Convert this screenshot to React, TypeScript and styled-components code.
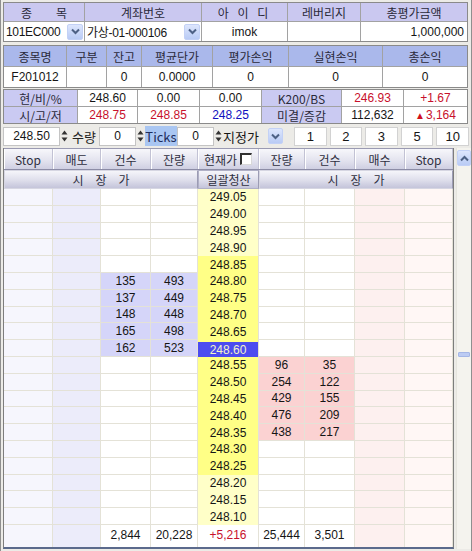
import styled, { createGlobalStyle } from "styled-components";

const GlobalStyle = createGlobalStyle`
  html, body {
    margin: 0;
    padding: 0;
    background: #ecebe7;
  }
  body {
    font-family: "Liberation Sans", "Noto Sans CJK KR", sans-serif;
    font-size: 12px;
    color: #151515;
  }
`;

type Tone =
  | "stopSell"
  | "sell"
  | "white"
  | "sellQty"
  | "buyQty"
  | "priceLight"
  | "priceBright"
  | "current"
  | "buy"
  | "stopBuy";

const toneBg: Record<Tone, string> = {
  stopSell: "#f6f6fd",
  sell: "#ececfa",
  white: "#ffffff",
  sellQty: "#d5d5f9",
  buyQty: "#fbd2d2",
  priceLight: "#ffffc8",
  priceBright: "#ffff86",
  //blue box sits inside a thin strip of the yellow price column
  current: "linear-gradient(#4c4cf0, #4c4cf0) content-box, #ffff86",
  buy: "#fdf0ef",
  stopBuy: "#fff7f5",
};

const bookCols = "49px 48px 50px 47px 61px 46px 50px 50px 48px";

//prices run from 249.05 down to 248.10
const prices = Array.from({ length: 20 }, (_, i) => (249.05 - i * 0.05).toFixed(2));
const currentPrice = "248.60";
const sellQty: Record<string, [string, string]> = {
  "248.80": ["135", "493"],
  "248.75": ["137", "449"],
  "248.70": ["148", "448"],
  "248.65": ["165", "498"],
  "248.60": ["162", "523"],
};
const buyQty: Record<string, [string, string]> = {
  "248.55": ["96", "35"],
  "248.50": ["254", "122"],
  "248.45": ["429", "155"],
  "248.40": ["476", "209"],
  "248.35": ["438", "217"],
};

const Window = styled.div`
  width: 472px;
  height: 551px;
  box-sizing: border-box;
  border-left: 1px solid #8f8f8f;
  border-right: 1px solid #8f8f8f;
  padding: 2px 2px 2px 2px;
  display: flex;
  flex-direction: column;
  overflow: hidden;
`;

const Table = styled.div<{ $cols: string; $rows: string; $mb?: number }>`
  display: grid;
  grid-template-columns: ${(p) => p.$cols};
  grid-template-rows: ${(p) => p.$rows};
  gap: 1px;
  background: #a2a2a2;
  border: 1px solid #8a8a8a;
  width: 465px;
  box-sizing: border-box;
  margin-bottom: ${(p) => p.$mb ?? 0}px;
`;

const Head = styled.div<{ $blue?: boolean; $spaced?: boolean }>`
  background: ${(p) => (p.$blue ? "#aab8eb" : "#cac8f0")};
  color: #2a2a3a;
  display: flex;
  align-items: center;
  justify-content: center;
  font-family: "Noto Sans CJK KR", sans-serif;
  font-size: 12px;
  letter-spacing: ${(p) => (p.$spaced ? "3px" : "0")};
  white-space: pre;
`;

const Label = styled.div`
  background: #cacaf2;
  color: #2a2a3a;
  display: flex;
  align-items: center;
  justify-content: center;
  font-family: "Noto Sans CJK KR", sans-serif;
  font-size: 12px;
`;

const Value = styled.div<{ $align?: string; $color?: string }>`
  background: #fff;
  display: flex;
  align-items: center;
  justify-content: ${(p) => p.$align ?? "center"};
  padding: 0 3px;
  color: ${(p) => p.$color ?? "#151515"};
  font-family: "Liberation Sans", "Noto Sans CJK KR", sans-serif;
  white-space: nowrap;
`;

const Combo = styled.div`
  background: #fff;
  display: flex;
  align-items: center;
  justify-content: space-between;
  padding: 0 1px 0 2px;
  white-space: nowrap;
  letter-spacing: -0.3px;
  font-family: "Liberation Sans", "Noto Sans CJK KR", sans-serif;
`;

const DropButton = styled.div<{ $w?: number }>`
  width: ${(p) => p.$w ?? 16}px;
  height: 16px;
  box-sizing: border-box;
  border: 1px solid #c3d1f6;
  border-radius: 2px;
  background: linear-gradient(#dde6fd, #b9cbf5);
  display: flex;
  align-items: center;
  justify-content: center;
  flex-shrink: 0;
`;

const Chevron = ({ up }: { up?: boolean }) => (
  <svg width="9" height="7" viewBox="0 0 9 7">
    <path
      d={up ? "M1 5.5 L4.5 2 L8 5.5" : "M1 1.5 L4.5 5 L8 1.5"}
      fill="none"
      stroke="#4d6185"
      strokeWidth="2"
    />
  </svg>
);

const Triangle = styled.span`
  color: #d0101c;
  font-size: 10px;
  margin-right: 1px;
`;

const ControlBar = styled.div`
  display: flex;
  align-items: center;
  height: 20px;
  margin-bottom: 2px;
`;

const Input = styled.div<{ $w: number }>`
  width: ${(p) => p.$w}px;
  height: 19px;
  box-sizing: border-box;
  background: #fff;
  border: 1px solid #c4c4c4;
  display: flex;
  align-items: center;
  justify-content: center;
`;

const Spin = styled.div`
  width: 7px;
  margin: 0 1px;
  display: flex;
  align-items: center;
`;

const SpinIcon = () => (
  <svg width="7" height="14" viewBox="0 0 7 14">
    <path d="M0.5 5.5 L3.5 1.5 L6.5 5.5 Z" fill="#333" />
    <path d="M0.5 8.5 L3.5 12.5 L6.5 8.5 Z" fill="#333" />
  </svg>
);

const BarLabel = styled.div<{ $w: number; $tinted?: boolean }>`
  width: ${(p) => p.$w}px;
  height: 20px;
  display: flex;
  align-items: center;
  justify-content: center;
  background: ${(p) => (p.$tinted ? "#a9c6f2" : "transparent")};
  color: ${(p) => (p.$tinted ? "#1c2c5c" : "#222")};
  font-family: "Noto Sans CJK KR", sans-serif;
  font-size: 13px;
`;

const OrderType = styled.div`
  width: 61px;
  display: flex;
  align-items: center;
  justify-content: space-between;
  font-family: "Noto Sans CJK KR", sans-serif;
  font-size: 13px;
  padding-right: 1px;
  box-sizing: border-box;
`;

const QtyButtons = styled.div`
  flex: 1;
  display: flex;
  gap: 3px;
  margin-left: 10px;
`;

const QtyButton = styled.div`
  flex: 1;
  height: 19px;
  box-sizing: border-box;
  background: #fff;
  border: 1px solid #d2d2d2;
  display: flex;
  align-items: center;
  justify-content: center;
  font-size: 13px;
`;

const Book = styled.div`
  flex: 1;
  display: flex;
  gap: 2px;
  width: 466px;
`;

const BookMain = styled.div`
  width: 451px;
  box-sizing: border-box;
  display: flex;
  flex-direction: column;
  border-left: 1px solid #7d7d7d;
  border-right: 1px solid #7d7d7d;
  border-bottom: 2px solid #5b6a8c;
  background: #fff;
`;

const HeadRow = styled.div`
  display: grid;
  grid-template-columns: ${bookCols};
  height: 20px;
  background: linear-gradient(#f7f7fb, #e4e4ef 55%, #cfcfe2);
  border-top: 1px solid #9a9ab2;
  border-bottom: 1px solid #8c8ca6;
`;

const HeadCell = styled.div`
  display: flex;
  align-items: center;
  justify-content: center;
  gap: 3px;
  border-right: 1px solid #c2c2d4;
  box-shadow: inset 1px 0 0 #ffffff;
  font-family: "Noto Sans CJK KR", sans-serif;
  font-size: 12px;
  color: #2f2f3f;
`;

const CheckBox = styled.span`
  width: 12px;
  height: 12px;
  box-sizing: border-box;
  background: #fff;
  border-top: 2px solid #303030;
  border-left: 2px solid #303030;
  border-right: 1px solid #d8d8d8;
  border-bottom: 1px solid #d8d8d8;
`;

const SubHeadRow = styled.div`
  display: grid;
  grid-template-columns: 194px 61px 194px;
  height: 18px;
  border-bottom: 1px solid #8c8ca6;
`;

const SubHeadCell = styled.div<{ $inset?: boolean }>`
  display: flex;
  align-items: center;
  justify-content: center;
  background: linear-gradient(#f5f5fa, #dedeeb 55%, #c4c4da);
  border: 1px solid ${(p) => (p.$inset ? "#b0b0c6" : "#d6d6e2")};
  border-right-color: #9c9cb4;
  font-family: "Noto Sans CJK KR", sans-serif;
  font-size: 12px;
  color: #2f2f3f;
  white-space: pre;
`;

const Row = styled.div<{ $fill?: boolean }>`
  display: grid;
  grid-template-columns: ${bookCols};
  height: ${(p) => (p.$fill ? "auto" : "16.8px")};
  flex: ${(p) => (p.$fill ? 1 : "none")};
`;

const Cell = styled.div<{ $tone: Tone; $line?: boolean; $color?: string }>`
  box-sizing: border-box;
  background: ${(p) => toneBg[p.$tone]};
  padding: ${(p) => (p.$tone === "current" ? "2px 0 0 0" : "0")};
  border-right: 1px solid #e4e2d7;
  border-bottom: ${(p) => (p.$line ? "1px solid #e4e2d7" : "none")};
  display: flex;
  align-items: center;
  justify-content: center;
  color: ${(p) => p.$color ?? (p.$tone === "current" ? "#f4f4c8" : "#151515")};
  font-size: 12px;
  line-height: 1;
`;

const FooterCell = styled(Cell)`
  align-items: flex-start;
  padding-top: 4px;
`;

const ScrollBar = styled.div`
  width: 15px;
  display: flex;
  flex-direction: column;
  align-items: center;
  background: #f4f3ee;
  border-left: 1px solid #e6e5de;
  padding-top: 2px;
  box-sizing: border-box;
`;

const Thumb = styled.div`
  width: 12px;
  height: 5px;
  margin-top: 186px;
  box-sizing: border-box;
  background: #bccbf3;
  border: 1px solid #a4b6e6;
  border-radius: 1px;
`;

const sellTone = (price: string): Tone => (sellQty[price] ? "sellQty" : "white");
const buyTone = (price: string): Tone => (buyQty[price] ? "buyQty" : "white");

const priceTone = (price: string, i: number): Tone => {
  if (price === currentPrice) return "current";
  return i >= 4 && i <= 16 ? "priceBright" : "priceLight";
};

export default function App() {
  return (
    <>
      <GlobalStyle />
      <Window>
        <Table $cols="80px 116px 85px 72px 1fr" $rows="18px 19px" $mb={3}>
          <Head>{"종　　목"}</Head>
          <Head>계좌번호</Head>
          <Head $spaced>아 이 디</Head>
          <Head>레버리지</Head>
          <Head>총평가금액</Head>
          <Combo>
            101EC000
            <DropButton>
              <Chevron />
            </DropButton>
          </Combo>
          <Combo>
            가상-01-000106
            <DropButton>
              <Chevron />
            </DropButton>
          </Combo>
          <Value>imok</Value>
          <Value />
          <Value $align="flex-end">1,000,000</Value>
        </Table>

        <Table $cols="62px 39px 34px 70px 75px 93px 1fr" $rows="20px 20px" $mb={1}>
          <Head $blue>종목명</Head>
          <Head $blue>구분</Head>
          <Head $blue>잔고</Head>
          <Head $blue>평균단가</Head>
          <Head $blue>평가손익</Head>
          <Head $blue>실현손익</Head>
          <Head $blue>총손익</Head>
          <Value>F201012</Value>
          <Value />
          <Value>0</Value>
          <Value>0.0000</Value>
          <Value>0</Value>
          <Value>0</Value>
          <Value>0</Value>
        </Table>

        <Table $cols="73px 59px 61px 61px 79px 61px 1fr" $rows="16px 16px" $mb={2}>
          <Label>현/비/%</Label>
          <Value>248.60</Value>
          <Value>0.00</Value>
          <Value>0.00</Value>
          <Label>K200/BS</Label>
          <Value $color="#c8102c">246.93</Value>
          <Value $color="#c8102c">+1.67</Value>
          <Label>시/고/저</Label>
          <Value $color="#c8102c">248.75</Value>
          <Value $color="#c8102c">248.85</Value>
          <Value $color="#1010c0">248.25</Value>
          <Label>미결/증감</Label>
          <Value>112,632</Value>
          <Value $color="#c8102c">
            <Triangle>▲</Triangle>3,164
          </Value>
        </Table>

        <ControlBar>
          <Input $w={57}>248.50</Input>
          <Spin>
            <SpinIcon />
          </Spin>
          <BarLabel $w={30}>수량</BarLabel>
          <Input $w={37}>0</Input>
          <Spin>
            <SpinIcon />
          </Spin>
          <BarLabel $w={32} $tinted>
            Ticks
          </BarLabel>
          <Input $w={37}>0</Input>
          <Spin>
            <SpinIcon />
          </Spin>
          <OrderType>
            지정가
            <DropButton $w={15}>
              <Chevron />
            </DropButton>
          </OrderType>
          <QtyButtons>
            {["1", "2", "3", "5", "10"].map((n) => (
              <QtyButton key={n}>{n}</QtyButton>
            ))}
          </QtyButtons>
        </ControlBar>

        <Book>
          <BookMain>
            <HeadRow>
              <HeadCell>Stop</HeadCell>
              <HeadCell>매도</HeadCell>
              <HeadCell>건수</HeadCell>
              <HeadCell>잔량</HeadCell>
              <HeadCell>
                현재가
                <CheckBox />
              </HeadCell>
              <HeadCell>잔량</HeadCell>
              <HeadCell>건수</HeadCell>
              <HeadCell>매수</HeadCell>
              <HeadCell>Stop</HeadCell>
            </HeadRow>
            <SubHeadRow>
              <SubHeadCell>{"시　장　가"}</SubHeadCell>
              <SubHeadCell $inset>일괄청산</SubHeadCell>
              <SubHeadCell>{"시　장　가"}</SubHeadCell>
            </SubHeadRow>
            {prices.map((price, i) => {
              const s = sellQty[price];
              const b = buyQty[price];
              return (
                <Row key={price}>
                  <Cell $tone="stopSell" $line />
                  <Cell $tone="sell" $line />
                  <Cell $tone={sellTone(price)} $line>
                    {s?.[0]}
                  </Cell>
                  <Cell $tone={sellTone(price)} $line>
                    {s?.[1]}
                  </Cell>
                  <Cell $tone={priceTone(price, i)}>{price}</Cell>
                  <Cell $tone={buyTone(price)} $line>
                    {b?.[0]}
                  </Cell>
                  <Cell $tone={buyTone(price)} $line>
                    {b?.[1]}
                  </Cell>
                  <Cell $tone="buy" $line />
                  <Cell $tone="stopBuy" $line />
                </Row>
              );
            })}
            <Row $fill>
              <FooterCell $tone="stopSell" />
              <FooterCell $tone="sell" />
              <FooterCell $tone="white">2,844</FooterCell>
              <FooterCell $tone="white">20,228</FooterCell>
              <FooterCell $tone="white" $color="#c8102c">
                +5,216
              </FooterCell>
              <FooterCell $tone="white">25,444</FooterCell>
              <FooterCell $tone="white">3,501</FooterCell>
              <FooterCell $tone="buy" />
              <FooterCell $tone="stopBuy" />
            </Row>
          </BookMain>
          <ScrollBar>
            <DropButton $w={14}>
              <Chevron up />
            </DropButton>
            <Thumb />
          </ScrollBar>
        </Book>
      </Window>
    </>
  );
}
